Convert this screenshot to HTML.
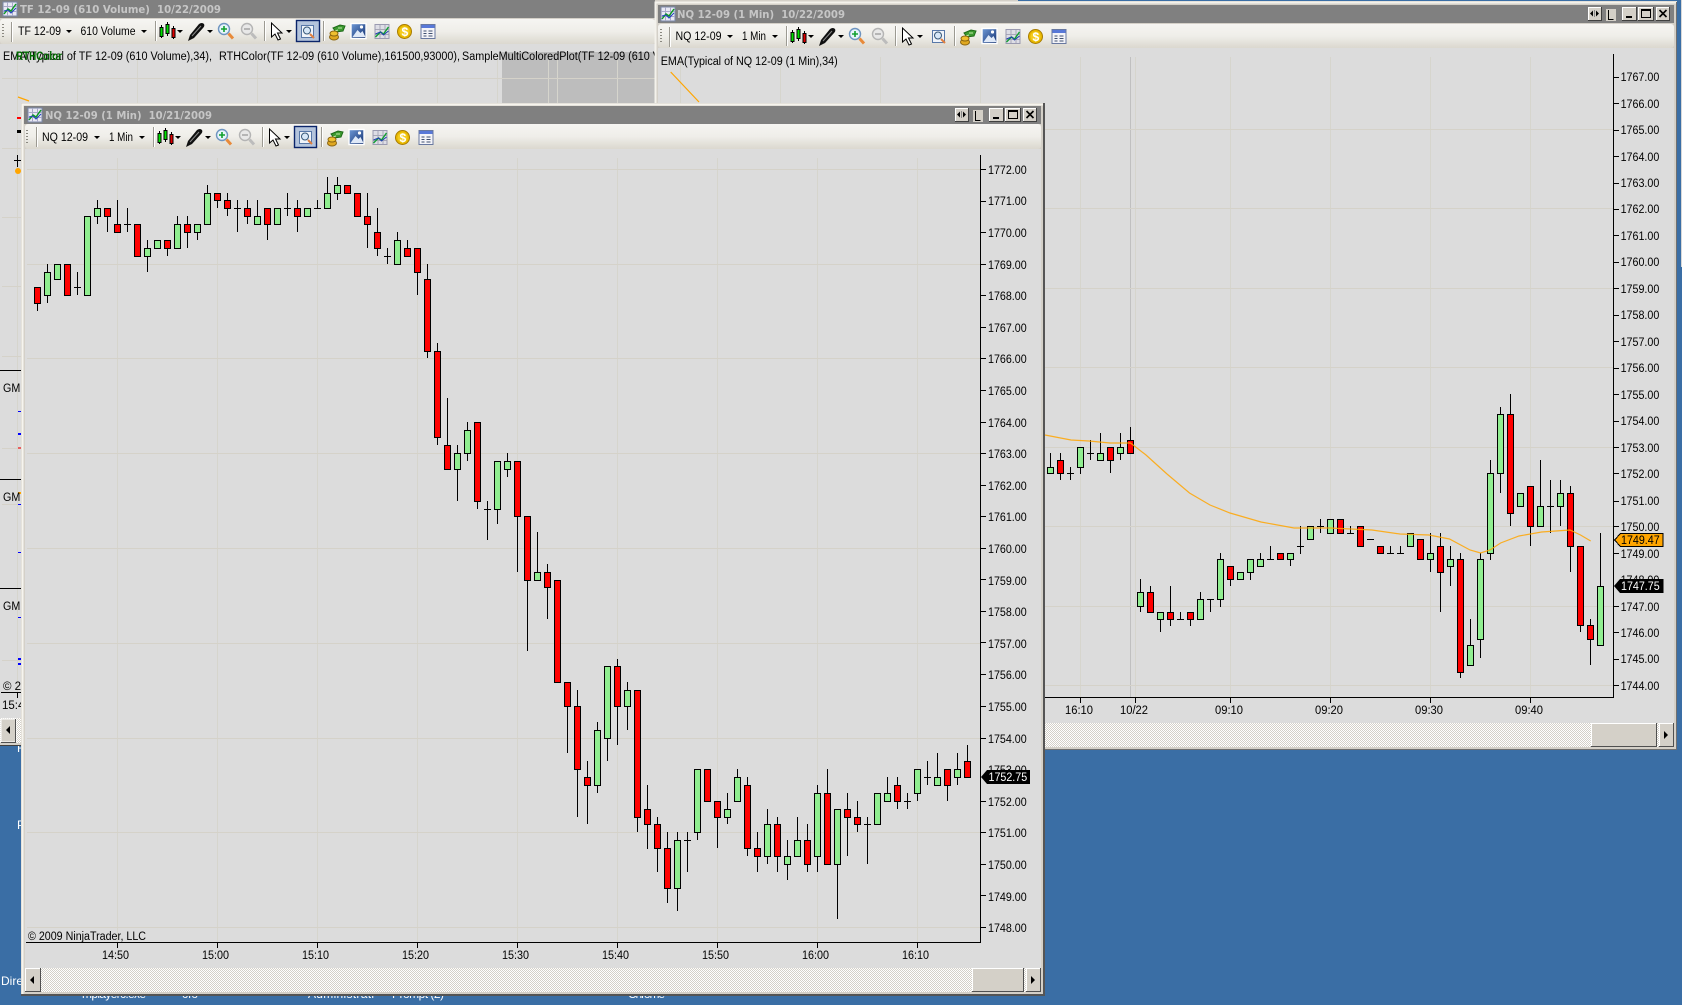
<!DOCTYPE html>
<html><head><meta charset="utf-8"><title>NinjaTrader charts</title>
<style>
html,body{margin:0;padding:0;background:#3a6ea5;overflow:hidden}
svg{display:block}
text{font-family:"Liberation Sans",Arial,sans-serif;font-size:11.5px;fill:#000}
.t{font-family:"DejaVu Sans","Liberation Sans",sans-serif;font-size:11px;font-weight:bold;fill:#c6c6c6}
.w{fill:#fff}
.g{stroke:#d5d2c9;stroke-width:1;fill:none}
.v{stroke:#d6d5cd;stroke-width:1;fill:none}
.k{stroke:#000;stroke-width:1;fill:none}
.G{fill:#90ee90;stroke:#000;stroke-width:1}
.R{fill:#f00;stroke:#000;stroke-width:1}
.c{shape-rendering:crispEdges}
</style></head><body>
<svg xmlns="http://www.w3.org/2000/svg" width="1682" height="1005" viewBox="0 0 1682 1005">
<defs>
<pattern id="d" width="2" height="2" patternUnits="userSpaceOnUse"><rect width="2" height="2" fill="#fff"/><rect width="1" height="1" fill="#d4d0c8"/><rect x="1" y="1" width="1" height="1" fill="#d4d0c8"/></pattern>
<linearGradient id="tg" x1="0" y1="0" x2="0" y2="1"><stop offset="0" stop-color="#f6f5f2"/><stop offset=".5" stop-color="#efeee9"/><stop offset="1" stop-color="#dbd8cf"/></linearGradient>
<linearGradient id="bl" x1="0" y1="0" x2="1" y2="1"><stop offset="0" stop-color="#6f9ad8"/><stop offset="1" stop-color="#12306f"/></linearGradient>
<g id="wi">
<rect width="14" height="14" fill="#e8e8f4" stroke="#7a88a8"/>
<path d="M0 4.5h14M0 9.5h14M4.5 0v14M9.5 0v14" stroke="#a8a8c8" fill="none"/>
<path d="M1 12L5 7l3 2 5-7" stroke="#0a9a20" stroke-width="1.4" fill="none"/>
<path d="M1 9l4-1 3 3 5-5" stroke="#2040c0" stroke-width="1" fill="none"/>
</g>
<g id="tb">
<path d="M153.5 127v20" stroke="#9c9a92"/><path d="M154.5 127v20" stroke="#fff"/>
<path d="M159.5 131v13M165.5 128v14M171.5 132v13" stroke="#000"/>
<rect x="158" y="133.5" width="3" height="9" fill="#00e000" stroke="#000"/>
<rect x="164" y="130.5" width="3" height="9" fill="#00e000" stroke="#000"/>
<rect x="170" y="134.5" width="3" height="9" fill="#e00000" stroke="#000"/>
<path d="M175 136h6l-3 3z" fill="#000"/>
<path d="M186 147l2-6L197 130q3-2 5 0q1 2-1 4L192 144z" fill="#101010"/><path d="M190 142l9-10" stroke="#8a8a8a"/>
<path d="M205 136h6l-3 3z" fill="#000"/>
<circle cx="222" cy="135" r="5.500" fill="#e6f4fb" stroke="#6e94c0" stroke-width="1.400"/>
<path d="M219 135h6M222 132v6" stroke="#10a030" stroke-width="1.600"/>
<path d="M226.500 139.500l4.500 5" stroke="#e88a3a" stroke-width="3"/>
<circle cx="245" cy="135" r="5.500" fill="#e8e8e8" stroke="#b4b4b4" stroke-width="1.400"/>
<path d="M242 135h6" stroke="#a8a8a8" stroke-width="1.600"/>
<path d="M249.500 139.500l4.500 5" stroke="#bcbcbc" stroke-width="3"/>
<path d="M262.500 127v20" stroke="#9c9a92"/><path d="M263.500 127v20" stroke="#fff"/>
<path d="M269.500 129v14l3.500-3 3 6 2.500-1-3-6h4.500z" fill="#fff" stroke="#000"/>
<path d="M284 136h6l-3 3z" fill="#000"/>
<path d="M321.500 127v20" stroke="#9c9a92"/><path d="M322.500 127v20" stroke="#fff"/>
<path d="M331 134l7-3 5 1-2 5-7 1z" fill="#3c9a30" stroke="#1e6a18"/><path d="M336 134l4 0M333 137l3-1" stroke="#bfe8a8"/>
<ellipse cx="332" cy="143" rx="4.500" ry="3" fill="#e0a820" stroke="#8a6410"/><ellipse cx="332" cy="139.500" rx="4" ry="2.500" fill="#f0c030" stroke="#8a6410"/>
<rect x="349" y="129.500" width="15" height="15" fill="url(#bl)" stroke="#fff" stroke-width="1.400"/>
<path d="M350.500 143l5-7 3 3 2-2 3 6z" fill="#dfe9f8"/><circle cx="359.500" cy="133" r="1.600" fill="#fff"/>
<rect x="373" y="130.500" width="14" height="14" fill="#dedee6" stroke="#9a9ab0"/>
<path d="M378 131v13M383 131v13M373.500 135.500h13M373.500 140.500h13" stroke="#a8a8b8"/>
<path d="M373.500 143l5-5 3 2 5-7" stroke="#10a030" stroke-width="1.400" fill="none"/><path d="M373.500 140l5-2 3 3 5-4" stroke="#2040b0" fill="none"/>
<circle cx="402.500" cy="137.500" r="7" fill="#e8b800" stroke="#a87c00"/><circle cx="402.500" cy="137.500" r="5" fill="#f4cc20"/>
<text x="399.500" y="142" style="font-size:12px;font-weight:bold;fill:#fff">$</text>
<rect x="419" y="130.500" width="14" height="14" fill="#f4f4f8" stroke="#6878a0"/><rect x="419.500" y="131" width="13" height="3" fill="#5878d8"/>
<path d="M421.500 137h3M426.500 137h4M421.500 139.500h3M426.500 139.500h4M421.500 142h3M426.500 142h4" stroke="#405070"/>
</g>
<g id="pic">
<rect x="299.500" y="131.500" width="12" height="12" fill="#f0f4fa" stroke="#5878a8"/>
<circle cx="305" cy="136.500" r="3.500" fill="#d8e8f8" stroke="#385878"/>
<path d="M308 140l4 4" stroke="#e08040" stroke-width="2"/>
</g>
<g id="btns">
<g class="c">
<rect x="955" y="108" width="14" height="14" fill="#d4d0c8"/><path d="M955.500 122v-13.500h13.500" stroke="#fff" fill="none"/><path d="M955 121.500h13.500v-13.500" stroke="#404040" fill="none"/>
<rect x="973" y="110" width="10" height="12" fill="#d4d0c8"/>
<rect x="989" y="108" width="14" height="14" fill="#d4d0c8"/><path d="M989.500 122v-13.500h13.500" stroke="#fff" fill="none"/><path d="M989 121.500h14.500v-13.500" stroke="#404040" fill="none"/>
<rect x="1005" y="108" width="16" height="14" fill="#d4d0c8"/><path d="M1005.500 122v-13.500h15.500" stroke="#fff" fill="none"/><path d="M1005 121.500h15.500v-13.500" stroke="#404040" fill="none"/>
<rect x="1023" y="108" width="14" height="14" fill="#d4d0c8"/><path d="M1023.500 122v-13.500h13.500" stroke="#fff" fill="none"/><path d="M1023 121.500h13.500v-13.500" stroke="#404040" fill="none"/>
<rect x="993" y="117" width="6" height="2" fill="#000"/>
<rect x="1008.500" y="110.500" width="9" height="8" fill="none" stroke="#000"/><rect x="1008" y="110" width="10" height="2" fill="#000"/>
</g>
<path d="M960 111.500v6l-3-3zM963 111.500v6l3-3z" fill="#000"/>
<path d="M961.500 111v7" stroke="#888"/>
<path d="M975.500 111v9.500h5" stroke="#000" fill="none"/>
<path d="M1026.500 111l7 7M1033.500 111l-7 7" stroke="#000" stroke-width="1.600"/>
</g>
<g id="grip"><path d="M0 0v1M0 3v1M0 6v1M0 9v1M0 12v1" stroke="#8a8880" stroke-width="2"/></g>
<clipPath id="lw"><rect x="0" y="0" width="655" height="746"/></clipPath>
</defs>

<rect width="1682" height="1005" fill="#3a6ea5"/>
<rect x="1681" y="0" width="1" height="267" fill="#d8d8d8"/>
<rect x="655" y="0" width="363" height="2" fill="#d4d0c8"/>

<g>
<text class="w" x="1" y="985" style="font-size:12px">Direct</text>
<text class="w" x="17" y="752" style="font-size:12px">R</text>
<text class="w" x="17" y="829" style="font-size:12px">P</text>
<text class="w" x="82" y="998" textLength="64" style="font-size:12px">mplayerc.exe</text>
<text class="w" x="182" y="998" style="font-size:12px">cfo</text>
<text class="w" x="308" y="998" textLength="66" style="font-size:12px">Administrati</text>
<text class="w" x="392" y="998" textLength="52" style="font-size:12px">Prompt (2)</text>
<text class="w" x="628" y="998" textLength="37" style="font-size:12px">Chrome</text>
</g>

<!-- LEFT WINDOW -->
<g clip-path="url(#lw)">
<rect x="0" y="0" width="655" height="745" fill="#d4d0c8"/>
<rect x="0" y="745" width="655" height="1" fill="#404040"/>
<rect x="0" y="0" width="655" height="18" fill="#808080"/>
<use href="#wi" x="3" y="2"/>
<text class="t" x="20" y="13" textLength="201" lengthAdjust="spacingAndGlyphs">TF 12-09 (610 Volume)&#160;&#160;10/22/2009</text>
<rect x="0" y="19" width="655" height="25" rx="3" fill="url(#tg)"/>
<use href="#grip" x="3" y="24"/>
<path d="M11.500 22v20" stroke="#9c9a92"/><path d="M12.500 22v20" stroke="#fff"/>
<text x="18" y="35" textLength="43" lengthAdjust="spacingAndGlyphs">TF 12-09</text>
<path d="M66 30h6l-3 3z" fill="#000"/>
<text x="80.500" y="35" textLength="55" lengthAdjust="spacingAndGlyphs">610 Volume</text>
<path d="M141 30h6l-3 3z" fill="#000"/>
<rect x="296.500" y="20.500" width="23" height="21" fill="#b4c4dc" stroke="#0a246a" stroke-width="1.400"/>
<use href="#tb" x="2" y="-106"/>
<use href="#pic" x="2" y="-106"/>
<rect x="0" y="44" width="655" height="674" fill="#dcdcdc"/>
<rect x="502" y="52" width="153" height="52" fill="#bdbdbd"/>
<path class="v c" d="M17.500 60V692M77.500 60v44M137.500 60v44M197.500 60v44M257.500 60v44M317.500 60v44M377.500 60v44M437.500 60v44M497.500 60v44M548.500 60v44M557.500 60v44M617.500 60v44"/>
<path class="g c" d="M2 78.500h653M2 148.500h19M2 217.500h19M2 286.500h19M2 356.500h19M2 448.500h19M2 504.500h19M2 660.500h19"/>
<text x="3" y="60" textLength="209" lengthAdjust="spacingAndGlyphs">EMA(Typical of TF 12-09 (610 Volume),34),</text>
<text x="16" y="60" textLength="46" lengthAdjust="spacingAndGlyphs" style="fill:#006a00;font-weight:bold">RTHColor</text>
<text x="219" y="60" textLength="241" lengthAdjust="spacingAndGlyphs">RTHColor(TF 12-09 (610 Volume),161500,93000),</text>
<text x="462" y="60" textLength="198" lengthAdjust="spacingAndGlyphs">SampleMultiColoredPlot(TF 12-09 (610 V</text>
<path d="M18 97l11 4" stroke="#ffa500" stroke-width="1.200" fill="none"/>
<g class="c">
<path d="M17 117h4v2h-4z" fill="#f00"/><path d="M17 130h4v3h-4z" fill="#000"/>
<path class="k" d="M17.500 155v12M14 160.500h7M0 370.500h21M0 479.500h21M0 588.500h21M1 692.500h20M17.500 692v6"/>
<path d="M18 411h3v1h-3zM18 433h3v2h-3zM18 504h3v1h-3zM18 552h3v1h-3zM18 658h3v2h-3zM18 663h3v2h-3zM18 617h3v1h-3z" fill="#00f"/>
<path d="M18 447h3v2h-3z" fill="#e86060"/><path d="M18 492h3v2h-3z" fill="#ffa500"/>
</g>
<circle cx="18" cy="171" r="3" fill="#ffa500"/>
<text x="3" y="392" textLength="25" lengthAdjust="spacingAndGlyphs">GMN</text><text x="3" y="501" textLength="25" lengthAdjust="spacingAndGlyphs">GMN</text><text x="3" y="610" textLength="25" lengthAdjust="spacingAndGlyphs">GMN</text>
<text x="3" y="690">© 2009</text><text x="2" y="709">15:40</text>
<rect x="0" y="718" width="21" height="25" fill="url(#d)"/>
<rect x="1" y="719" width="15" height="23" fill="#d4d0c8" stroke="#fff"/><path d="M15.500 719v23.500H1" stroke="#505050" fill="none"/>
<path d="M10 726v8l-4-4z" fill="#000"/>
</g>

<!-- RIGHT WINDOW -->
<rect x="655" y="1" width="1022" height="749" fill="#d4d0c8"/>
<path d="M655.500 750V2.500H1677" stroke="#f4f2ec" stroke-width="2" fill="none"/>
<path d="M1676.500 2v748M655 749.500h1022" stroke="#707070"/>
<rect x="658" y="5" width="1016" height="18" fill="#808080"/>
<use href="#wi" x="661" y="7"/>
<text class="t" x="677" y="18" textLength="168" lengthAdjust="spacingAndGlyphs">NQ 12-09 (1 Min)&#160;&#160;10/22/2009</text>
<use href="#btns" x="633" y="-101"/>
<rect x="658" y="24" width="1016" height="24" rx="3" fill="url(#tg)"/>
<use href="#grip" x="661" y="29"/>
<path d="M669.500 27v20" stroke="#9c9a92"/><path d="M670.500 27v20" stroke="#fff"/>
<text x="675.500" y="40" textLength="46" lengthAdjust="spacingAndGlyphs">NQ 12-09</text>
<path d="M727 35h6l-3 3z" fill="#000"/>
<text x="742" y="40" textLength="24" lengthAdjust="spacingAndGlyphs">1 Min</text>
<path d="M772 35h6l-3 3z" fill="#000"/>
<use href="#tb" x="633" y="-101"/>
<use href="#pic" x="633" y="-101"/>
<rect x="658" y="48" width="1016" height="675" fill="#dcdcdc"/>
<path class="v c" d="M680.500 57V697M780.500 57V697M880.500 57V697M980.500 57V697M1080.500 57V697M1135.500 57V697M1230.500 57V697M1330.500 57V697M1430.500 57V697M1530.500 57V697"/>
<path class="c" d="M1130.500 57V697" stroke="#c0c0c0"/>
<path class="g c" d="M660 129.500h953M660 208.500h953M660 288.500h953M660 367.500h953M660 447.500h953M660 526.500h953M660 606.500h953M660 685.500h953"/>
<text x="660.700" y="65" textLength="177" lengthAdjust="spacingAndGlyphs">EMA(Typical of NQ 12-09 (1 Min),34)</text>
<path d="M670.700 72L699 102" stroke="#ffa500" stroke-width="1.200" fill="none"/>
<path class="k c" d="M1613.500 54V698M1043 697.500h571M1080.500 697v6M1135.500 697v6M1230.500 697v6M1330.500 697v6M1430.500 697v6M1530.500 697v6"/>
<path class="k c" d="M1613 77.500h6M1613 103.500h6M1613 130.500h6M1613 156.500h6M1613 183.500h6M1613 209.500h6M1613 235.500h6M1613 262.500h6M1613 288.500h6M1613 315.500h6M1613 341.500h6M1613 368.500h6M1613 394.500h6M1613 421.500h6M1613 447.500h6M1613 473.500h6M1613 501.500h6M1613 526.500h6M1613 553.500h6M1613 606.500h6M1613 632.500h6M1613 659.500h6M1613 685.500h6"/>
<g>
<text x="1620.600" y="81" textLength="38.700" lengthAdjust="spacingAndGlyphs">1767.00</text>
<text x="1620.600" y="108" textLength="38.700" lengthAdjust="spacingAndGlyphs">1766.00</text>
<text x="1620.600" y="134" textLength="38.700" lengthAdjust="spacingAndGlyphs">1765.00</text>
<text x="1620.600" y="161" textLength="38.700" lengthAdjust="spacingAndGlyphs">1764.00</text>
<text x="1620.600" y="187" textLength="38.700" lengthAdjust="spacingAndGlyphs">1763.00</text>
<text x="1620.600" y="213" textLength="38.700" lengthAdjust="spacingAndGlyphs">1762.00</text>
<text x="1620.600" y="240" textLength="38.700" lengthAdjust="spacingAndGlyphs">1761.00</text>
<text x="1620.600" y="266" textLength="38.700" lengthAdjust="spacingAndGlyphs">1760.00</text>
<text x="1620.600" y="293" textLength="38.700" lengthAdjust="spacingAndGlyphs">1759.00</text>
<text x="1620.600" y="319" textLength="38.700" lengthAdjust="spacingAndGlyphs">1758.00</text>
<text x="1620.600" y="346" textLength="38.700" lengthAdjust="spacingAndGlyphs">1757.00</text>
<text x="1620.600" y="372" textLength="38.700" lengthAdjust="spacingAndGlyphs">1756.00</text>
<text x="1620.600" y="399" textLength="38.700" lengthAdjust="spacingAndGlyphs">1755.00</text>
<text x="1620.600" y="425" textLength="38.700" lengthAdjust="spacingAndGlyphs">1754.00</text>
<text x="1620.600" y="452" textLength="38.700" lengthAdjust="spacingAndGlyphs">1753.00</text>
<text x="1620.600" y="478" textLength="38.700" lengthAdjust="spacingAndGlyphs">1752.00</text>
<text x="1620.600" y="505" textLength="38.700" lengthAdjust="spacingAndGlyphs">1751.00</text>
<text x="1620.600" y="531" textLength="38.700" lengthAdjust="spacingAndGlyphs">1750.00</text>
<text x="1620.600" y="558" textLength="38.700" lengthAdjust="spacingAndGlyphs">1749.00</text>
<text x="1620.600" y="584" textLength="38.700" lengthAdjust="spacingAndGlyphs">1748.00</text>
<text x="1620.600" y="611" textLength="38.700" lengthAdjust="spacingAndGlyphs">1747.00</text>
<text x="1620.600" y="637" textLength="38.700" lengthAdjust="spacingAndGlyphs">1746.00</text>
<text x="1620.600" y="663" textLength="38.700" lengthAdjust="spacingAndGlyphs">1745.00</text>
<text x="1620.600" y="690" textLength="38.700" lengthAdjust="spacingAndGlyphs">1744.00</text>
</g>
<g>
<text x="1065" y="714" textLength="28" lengthAdjust="spacingAndGlyphs">16:10</text>
<text x="1120" y="714" textLength="28" lengthAdjust="spacingAndGlyphs">10/22</text>
<text x="1215" y="714" textLength="28" lengthAdjust="spacingAndGlyphs">09:10</text>
<text x="1315" y="714" textLength="28" lengthAdjust="spacingAndGlyphs">09:20</text>
<text x="1415" y="714" textLength="28" lengthAdjust="spacingAndGlyphs">09:30</text>
<text x="1515" y="714" textLength="28" lengthAdjust="spacingAndGlyphs">09:40</text>
</g>
<path class="k c" d="M1050.500 453V473M1060.500 453V480M1070.500 467V480M1067 473.500h7M1080.500 447V474M1090.500 440V460M1087 453.500h7M1100.500 433V460M1110.500 447V473M1120.500 433V460M1130.500 427V453M1140.500 579V612M1150.500 586V612M1160.500 612V632M1170.500 586V626M1180.500 612V619M1177 619.500h7M1190.500 612V626M1200.500 592V619M1210.500 599V612M1207 599.500h7M1220.500 553V607M1230.500 566V586M1250.500 559V580M1260.500 553V566M1270.500 546V559M1267 559.500h7M1290.500 553V566M1300.500 526V554M1297 546.500h7M1320.500 519V533M1317 526.500h7M1350.500 526V533M1347 533.500h7M1367 539.500h7M1390.500 546V553M1387 553.500h7M1400.500 546V553M1397 553.500h7M1430.500 533V572M1440.500 533V612M1450.500 546V586M1460.500 553V678M1470.500 619V665M1480.500 553V658M1490.500 460V560M1500.500 407V493M1510.500 394V526M1530.500 486V546M1540.500 460V526M1550.500 480V533M1547 506.500h7M1560.500 480V526M1570.500 486V572M1580.500 546V632M1590.500 619V665M1600.500 533V645"/>
<path class="G c" d="M1047.500 467.500h6v6h-6zM1077.500 447.500h6v20h-6zM1097.500 453.500h6v7h-6zM1117.500 447.500h6v6h-6zM1137.500 592.500h6v14h-6zM1157.500 612.500h6v7h-6zM1197.500 599.500h6v20h-6zM1217.500 559.500h6v40h-6zM1237.500 572.500h6v7h-6zM1247.500 559.500h6v13h-6zM1257.500 559.500h6v7h-6zM1287.500 553.500h6v6h-6zM1307.500 526.500h6v13h-6zM1327.500 519.500h6v14h-6zM1407.500 533.500h6v13h-6zM1427.500 553.500h6v6h-6zM1447.500 559.500h6v7h-6zM1467.500 645.500h6v20h-6zM1477.500 559.500h6v80h-6zM1487.500 473.500h6v80h-6zM1497.500 414.500h6v59h-6zM1517.500 493.500h6v13h-6zM1537.500 506.500h6v20h-6zM1557.500 493.500h6v13h-6zM1597.500 586.500h6v59h-6z"/>
<path class="R c" d="M1057.500 460.500h6v13h-6zM1107.500 447.500h6v13h-6zM1127.500 440.500h6v13h-6zM1147.500 592.500h6v20h-6zM1167.500 612.500h6v7h-6zM1187.500 612.500h6v7h-6zM1227.500 566.500h6v13h-6zM1277.500 553.500h6v6h-6zM1337.500 519.500h6v14h-6zM1357.500 526.500h6v20h-6zM1377.500 546.500h6v7h-6zM1417.500 539.500h6v20h-6zM1437.500 546.500h6v26h-6zM1457.500 559.500h6v113h-6zM1507.500 414.500h6v99h-6zM1527.500 486.500h6v40h-6zM1567.500 493.500h6v53h-6zM1577.500 546.500h6v79h-6zM1587.500 625.500h6v14h-6z"/>
<path d="M1045 435L1071 440 1089 441 1110 443 1130.500 443 1146 455 1167 474 1189.500 493 1210 505 1230 513 1261 522 1294 528 1330 528 1372 530 1400 534 1429 535 1449.500 539 1470 550 1480.500 553 1490 550 1500.600 543 1519 536 1541.600 532 1570 530 1580.500 535 1590.700 541" fill="none" stroke="#ffa500" stroke-width="1.200" stroke-opacity=".85"/>
<path class="c" d="M1614.500 540l6-6.500h42.500v13h-42.500z" fill="#ffa500" stroke="#000"/>
<text x="1621" y="544" textLength="38.700" lengthAdjust="spacingAndGlyphs">1749.47</text>
<path d="M1614 586l6-7h43.500v14H1620z" fill="#000"/>
<text x="1621" y="590" textLength="38.700" lengthAdjust="spacingAndGlyphs" class="w">1747.75</text>
<rect x="1044" y="723" width="630" height="24" fill="url(#d)"/>
<rect x="1591" y="723" width="66" height="24" fill="#d4d0c8"/><path d="M1591.500 747v-23.500H1657" stroke="#fff" fill="none"/><path d="M1591 746.500h65.500V723" stroke="#505050" fill="none"/>
<rect x="1659" y="723" width="15" height="24" fill="#d4d0c8"/><path d="M1659.500 747v-23.500h14" stroke="#fff" fill="none"/><path d="M1659 746.500h14.500V723" stroke="#505050" fill="none"/>
<path d="M1664 731v8l4-4z" fill="#000"/>

<!-- MAIN WINDOW -->
<rect x="21" y="103" width="1024" height="893" fill="#d4d0c8"/>
<path d="M22.500 996V104.500H1045" stroke="#f6f4ee" stroke-width="2" fill="none"/>
<path d="M1044 103v893M21 995h1024" stroke="#555" stroke-width="2"/>
<rect x="24" y="106" width="1017" height="18" fill="#808080"/>
<use href="#wi" x="28" y="108"/>
<text class="t" x="45" y="119" textLength="167" lengthAdjust="spacingAndGlyphs">NQ 12-09 (1 Min)&#160;&#160;10/21/2009</text>
<use href="#btns"/>
<rect x="25" y="124" width="1016" height="25" rx="3" fill="url(#tg)"/>
<use href="#grip" x="27" y="130"/>
<path d="M36.500 127v20" stroke="#9c9a92"/><path d="M37.500 127v20" stroke="#fff"/>
<text x="42" y="141" textLength="46" lengthAdjust="spacingAndGlyphs">NQ 12-09</text>
<path d="M94 136h6l-3 3z" fill="#000"/>
<text x="109" y="141" textLength="24" lengthAdjust="spacingAndGlyphs">1 Min</text>
<path d="M139 136h6l-3 3z" fill="#000"/>
<rect x="294.500" y="126.500" width="22" height="21" fill="#b4c4dc" stroke="#0a246a" stroke-width="1.400"/>
<use href="#tb"/>
<use href="#pic"/>
<rect x="25" y="149" width="1016" height="819" fill="#dcdcdc"/>
<path class="v c" d="M117.500 158V942M217.500 158V942M317.500 158V942M417.500 158V942M517.500 158V942M617.500 158V942M717.500 158V942M817.500 158V942M917.500 158V942"/>
<path class="g c" d="M27 169.500h953M27 264.500h953M27 358.500h953M27 453.500h953M27 548.500h953M27 643.500h953M27 738.500h953M27 832.500h953M27 927.500h953"/>
<path class="k c" d="M980.500 155V943M26 942.500h955M117.500 942v6M217.500 942v6M317.500 942v6M417.500 942v6M517.500 942v6M617.500 942v6M717.500 942v6M817.500 942v6M917.500 942v6"/>
<path class="k c" d="M980 169.500h6M980 201.500h6M980 232.500h6M980 264.500h6M980 295.500h6M980 327.500h6M980 358.500h6M980 390.500h6M980 422.500h6M980 453.500h6M980 485.500h6M980 516.500h6M980 548.500h6M980 579.500h6M980 611.500h6M980 642.500h6M980 674.500h6M980 706.500h6M980 738.500h6M980 801.500h6M980 832.500h6M980 864.500h6M980 895.500h6M980 927.500h6"/>
<g>
<text x="988" y="174" textLength="38.700" lengthAdjust="spacingAndGlyphs">1772.00</text>
<text x="988" y="205" textLength="38.700" lengthAdjust="spacingAndGlyphs">1771.00</text>
<text x="988" y="237" textLength="38.700" lengthAdjust="spacingAndGlyphs">1770.00</text>
<text x="988" y="269" textLength="38.700" lengthAdjust="spacingAndGlyphs">1769.00</text>
<text x="988" y="300" textLength="38.700" lengthAdjust="spacingAndGlyphs">1768.00</text>
<text x="988" y="332" textLength="38.700" lengthAdjust="spacingAndGlyphs">1767.00</text>
<text x="988" y="363" textLength="38.700" lengthAdjust="spacingAndGlyphs">1766.00</text>
<text x="988" y="395" textLength="38.700" lengthAdjust="spacingAndGlyphs">1765.00</text>
<text x="988" y="427" textLength="38.700" lengthAdjust="spacingAndGlyphs">1764.00</text>
<text x="988" y="458" textLength="38.700" lengthAdjust="spacingAndGlyphs">1763.00</text>
<text x="988" y="490" textLength="38.700" lengthAdjust="spacingAndGlyphs">1762.00</text>
<text x="988" y="521" textLength="38.700" lengthAdjust="spacingAndGlyphs">1761.00</text>
<text x="988" y="553" textLength="38.700" lengthAdjust="spacingAndGlyphs">1760.00</text>
<text x="988" y="585" textLength="38.700" lengthAdjust="spacingAndGlyphs">1759.00</text>
<text x="988" y="616" textLength="38.700" lengthAdjust="spacingAndGlyphs">1758.00</text>
<text x="988" y="648" textLength="38.700" lengthAdjust="spacingAndGlyphs">1757.00</text>
<text x="988" y="679" textLength="38.700" lengthAdjust="spacingAndGlyphs">1756.00</text>
<text x="988" y="711" textLength="38.700" lengthAdjust="spacingAndGlyphs">1755.00</text>
<text x="988" y="743" textLength="38.700" lengthAdjust="spacingAndGlyphs">1754.00</text>
<text x="988" y="774" textLength="38.700" lengthAdjust="spacingAndGlyphs">1753.00</text>
<text x="988" y="806" textLength="38.700" lengthAdjust="spacingAndGlyphs">1752.00</text>
<text x="988" y="837" textLength="38.700" lengthAdjust="spacingAndGlyphs">1751.00</text>
<text x="988" y="869" textLength="38.700" lengthAdjust="spacingAndGlyphs">1750.00</text>
<text x="988" y="901" textLength="38.700" lengthAdjust="spacingAndGlyphs">1749.00</text>
<text x="988" y="932" textLength="38.700" lengthAdjust="spacingAndGlyphs">1748.00</text>
</g>
<text x="28" y="940" textLength="118" lengthAdjust="spacingAndGlyphs">© 2009 NinjaTrader, LLC</text>
<g>
<text x="102" y="959" textLength="27" lengthAdjust="spacingAndGlyphs">14:50</text>
<text x="202" y="959" textLength="27" lengthAdjust="spacingAndGlyphs">15:00</text>
<text x="302" y="959" textLength="27" lengthAdjust="spacingAndGlyphs">15:10</text>
<text x="402" y="959" textLength="27" lengthAdjust="spacingAndGlyphs">15:20</text>
<text x="502" y="959" textLength="27" lengthAdjust="spacingAndGlyphs">15:30</text>
<text x="602" y="959" textLength="27" lengthAdjust="spacingAndGlyphs">15:40</text>
<text x="702" y="959" textLength="27" lengthAdjust="spacingAndGlyphs">15:50</text>
<text x="802" y="959" textLength="27" lengthAdjust="spacingAndGlyphs">16:00</text>
<text x="902" y="959" textLength="27" lengthAdjust="spacingAndGlyphs">16:10</text>
</g>
<path class="k c" d="M37.500 287V311M47.500 264V303M77.500 272V295M74 287.500h7M97.500 200V224M107.500 208V232M117.500 200V232M127.500 208V232M124 224.500h7M147.500 240V272M167.500 240V256M177.500 216V248M187.500 216V248M197.500 224V240M207.500 185V224M217.500 193V208M227.500 193V216M237.500 200V232M234 208.500h7M247.500 200V224M257.500 200V224M267.500 208V240M287.500 193V216M284 208.500h7M297.500 200V232M317.500 200V208M314 208.500h7M327.500 177V208M337.500 177V200M367.500 193V248M377.500 208V256M387.500 248V264M384 256.500h7M397.500 232V264M407.500 240V256M417.500 248V295M427.500 264V358M437.500 343V445M447.500 398V469M457.500 445V501M467.500 422V461M477.500 422V509M487.500 501V540M484 509.500h7M497.500 461V524M507.500 453V477M517.500 461V572M527.500 516V651M537.500 532V580M547.500 564V619M567.500 682V753M577.500 690V817M587.500 761V824M597.500 722V793M607.500 666V761M617.500 659V745M627.500 682V730M637.500 690V832M647.500 785V849M657.500 817V872M667.500 832V903M677.500 832V911M687.500 832V872M684 840.500h7M697.500 769V840M717.500 801V848M727.500 793V824M737.500 769V801M747.500 777V856M757.500 832V872M767.500 809V864M777.500 817V872M787.500 840V880M797.500 817V856M807.500 824V872M817.500 785V872M827.500 769V864M837.500 809V919M847.500 793V856M857.500 801V832M867.500 817V864M864 824.500h7M887.500 777V801M897.500 777V809M907.500 793V809M904 801.500h7M917.500 769V801M927.500 761V785M924 777.500h7M937.500 753V785M947.500 769V801M957.500 753V785M967.500 745V777"/>
<path class="G c" d="M44.500 272.500h6v23h-6zM54.500 264.500h6v15h-6zM84.500 216.500h6v79h-6zM94.500 208.500h6v8h-6zM144.500 248.500h6v8h-6zM154.500 240.500h6v8h-6zM174.500 224.500h6v24h-6zM194.500 224.500h6v8h-6zM204.500 193.500h6v31h-6zM254.500 216.500h6v8h-6zM274.500 208.500h6v16h-6zM304.500 208.500h6v8h-6zM324.500 193.500h6v15h-6zM334.500 185.500h6v8h-6zM394.500 240.500h6v24h-6zM454.500 453.500h6v16h-6zM464.500 430.500h6v23h-6zM494.500 461.500h6v48h-6zM504.500 461.500h6v8h-6zM534.500 572.500h6v8h-6zM594.500 730.500h6v55h-6zM604.500 666.500h6v72h-6zM624.500 690.500h6v16h-6zM674.500 840.500h6v48h-6zM694.500 769.500h6v63h-6zM724.500 809.500h6v8h-6zM734.500 777.500h6v24h-6zM764.500 824.500h6v32h-6zM784.500 856.500h6v8h-6zM794.500 840.500h6v16h-6zM814.500 793.500h6v63h-6zM834.500 809.500h6v55h-6zM874.500 793.500h6v31h-6zM884.500 793.500h6v8h-6zM914.500 769.500h6v24h-6zM934.500 777.500h6v8h-6zM954.500 769.500h6v8h-6z"/>
<path class="R c" d="M34.500 287.500h6v16h-6zM64.500 264.500h6v31h-6zM104.500 208.500h6v8h-6zM114.500 224.500h6v8h-6zM134.500 224.500h6v32h-6zM164.500 240.500h6v8h-6zM184.500 224.500h6v8h-6zM214.500 193.500h6v7h-6zM224.500 200.500h6v8h-6zM244.500 208.500h6v8h-6zM264.500 208.500h6v16h-6zM294.500 208.500h6v8h-6zM344.500 185.500h6v8h-6zM354.500 193.500h6v23h-6zM364.500 216.500h6v8h-6zM374.500 232.500h6v16h-6zM404.500 248.500h6v8h-6zM414.500 248.500h6v24h-6zM424.500 279.500h6v72h-6zM434.500 351.500h6v86h-6zM444.500 445.500h6v24h-6zM474.500 422.500h6v79h-6zM514.500 461.500h6v55h-6zM524.500 516.500h6v64h-6zM544.500 572.500h6v15h-6zM554.500 580.500h6v102h-6zM564.500 682.500h6v24h-6zM574.500 706.500h6v63h-6zM584.500 777.500h6v8h-6zM614.500 666.500h6v40h-6zM634.500 690.500h6v127h-6zM644.500 809.500h6v15h-6zM654.500 824.500h6v24h-6zM664.500 848.500h6v40h-6zM704.500 769.500h6v32h-6zM714.500 801.500h6v16h-6zM744.500 785.500h6v63h-6zM754.500 848.500h6v8h-6zM774.500 824.500h6v32h-6zM804.500 840.500h6v24h-6zM824.500 793.500h6v71h-6zM844.500 809.500h6v8h-6zM854.500 817.500h6v7h-6zM894.500 785.500h6v16h-6zM944.500 769.500h6v16h-6zM964.500 761.500h6v16h-6z"/>
<path d="M981 777l6-7h43v14h-43z" fill="#000"/>
<text x="988.500" y="781" textLength="38.700" lengthAdjust="spacingAndGlyphs" class="w">1752.75</text>
<rect x="25" y="968" width="1016" height="24" fill="url(#d)"/>
<rect x="25" y="968" width="16" height="24" fill="#d4d0c8"/><path d="M25.500 992v-23.500H41" stroke="#fff" fill="none"/><path d="M25 991.500h15.500V968" stroke="#505050" fill="none"/>
<path d="M34 976v8l-4-4z" fill="#000"/>
<rect x="972" y="968" width="52" height="24" fill="#d4d0c8"/><path d="M972.500 992v-23.500H1024" stroke="#fff" fill="none"/><path d="M972 991.500h51.500V968" stroke="#505050" fill="none"/>
<rect x="1026" y="968" width="15" height="24" fill="#d4d0c8"/><path d="M1026.500 992v-23.500H1041" stroke="#fff" fill="none"/><path d="M1026 991.500h14.500V968" stroke="#505050" fill="none"/>
<path d="M1031 976v8l4-4z" fill="#000"/>
</svg>
</body></html>
